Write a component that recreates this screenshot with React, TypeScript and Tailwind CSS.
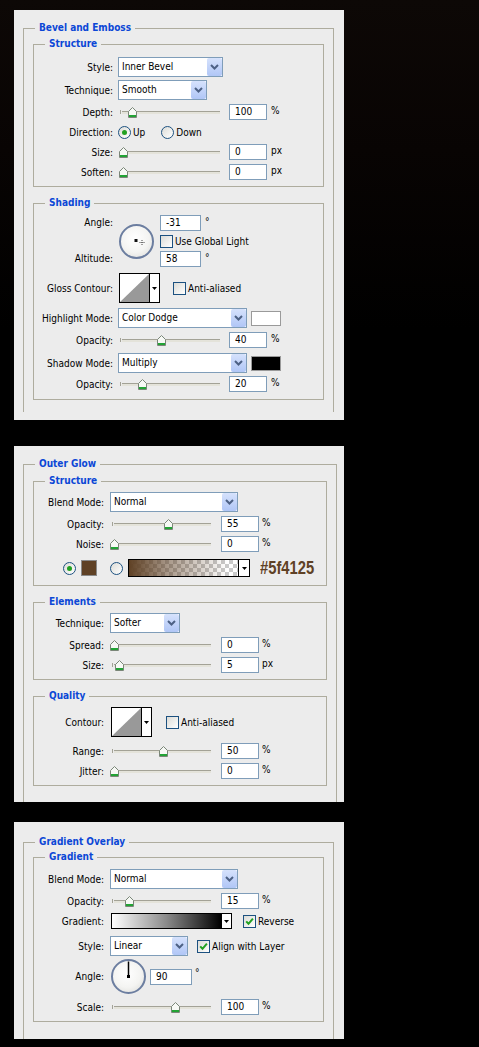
import React from "react";

const LINE = "border-[#aeac9e]";

function Legend({ children }: { children: React.ReactNode }) {
  return (
    <legend className="ml-[11px] px-[4px] text-[10px] font-bold leading-[12px] text-[#0b47d6]">
      {children}
    </legend>
  );
}

function Field({ value, className = "", w = "w-[38px]" }: { value: string; className?: string; w?: string }) {
  return (
    <div className={`${w} ${className} flex h-[16px] shrink-0 items-center border border-[#7f9db9] bg-white pl-[5px] leading-none`}>
      {value}
    </div>
  );
}

function Select({ w, value, className = "" }: { w: string; value: string; className?: string }) {
  return (
    <div className={`${w} ${className} flex h-[20px] shrink-0 items-center border border-[#7f9db9] bg-white`}>
      <span className="flex-1 pl-[3px] leading-none">{value}</span>
      <span className="flex h-full w-[15px] items-center justify-center rounded-[2px] bg-linear-to-b from-[#d6e2fc] to-[#b0c6f6]">
        <svg width="9" height="6" viewBox="0 0 9 6">
          <path d="M1 1l3.5 3.5L8 1" fill="none" stroke="#4d6185" strokeWidth="2" />
        </svg>
      </span>
    </div>
  );
}

function Thumb({ left }: { left: number }) {
  return (
    <svg
      width="9"
      height="11"
      viewBox="0 0 9 11"
      className="absolute top-[2px]"
      style={{ left }}
    >
      <path d="M0.5 10.5V4.5L4.5 0.5L8.5 4.5V10.5Z" fill="#f7f9f5" stroke="#7a8678" />
      <rect x="1" y="8" width="7" height="2" fill="#22a335" />
    </svg>
  );
}

function Slider({ w, pos }: { w: string; pos: number }) {
  return (
    <div className={`${w} relative h-[14px] shrink-0`}>
      <div className="absolute left-[4px] right-[2px] top-[6px] h-[3px] border-t border-[#a3a296] bg-[#e4e3da]" />
      <div className="absolute left-[2px] top-[5px] h-[4px] w-[1px] bg-[#a3a296]" />
      <Thumb left={4 + pos - 4.5} />
    </div>
  );
}

function SliderRow({
  label,
  value,
  unit,
  pos,
  wide,
  className = "",
}: {
  label: string;
  value: string;
  unit: string;
  pos: number;
  wide?: boolean;
  className?: string;
}) {
  return (
    <div className={`flex h-[16px] items-center ${className}`}>
      <div className={`${wide ? "w-[79px]" : "w-[70px]"} shrink-0 text-right`}>{label}</div>
      <Slider w={wide ? "ml-[5px] w-[104px]" : "ml-[6px] w-[103px]"} pos={pos} />
      <Field className={wide ? "ml-[7px]" : "ml-[8px]"} value={value} />
      <span className={`${wide ? "ml-[4px]" : "ml-[3px]"} -mt-[3px]`}>{unit}</span>
    </div>
  );
}

function Radio({ checked, className = "" }: { checked?: boolean; className?: string }) {
  return (
    <span
      className={`${className} flex h-[13px] w-[13px] shrink-0 items-center justify-center rounded-full border border-[#1c5180] bg-linear-to-br from-[#dcdcd7] to-white`}
    >
      {checked && <span className="h-[5px] w-[5px] rounded-full bg-[#21a121]" />}
    </span>
  );
}

function Check({ checked, className = "" }: { checked?: boolean; className?: string }) {
  return (
    <span
      className={`${className} flex h-[13px] w-[13px] shrink-0 items-center justify-center border border-[#1c5180] bg-linear-to-br from-[#dcdcd7] to-white`}
    >
      {checked && (
        <svg width="9" height="9" viewBox="0 0 9 9">
          <path d="M1.2 4.4l2.3 2.4L7.9 1.6" fill="none" stroke="#21a121" strokeWidth="2" />
        </svg>
      )}
    </span>
  );
}

function Arrow() {
  return (
    <svg width="5" height="3" viewBox="0 0 5 3">
      <path d="M0 0h5L2.5 3z" fill="#000" />
    </svg>
  );
}

function ContourBox({ className = "" }: { className?: string }) {
  return (
    <div className={`${className} flex h-[30px] w-[41px] shrink-0 border border-black bg-white`}>
      <svg width="29" height="28" viewBox="0 0 29 28" className="block">
        <path d="M0 28L29 0V28Z" fill="#999999" />
      </svg>
      <div className="flex w-[10px] items-center justify-center border-l border-black">
        <Arrow />
      </div>
    </div>
  );
}

function Panel({ className, children }: { className: string; children: React.ReactNode }) {
  return <div className={`${className} w-[330px] bg-[#ececec] pl-[9px] pr-[10px]`}>{children}</div>;
}

export default function App() {
  return (
    <div className="min-h-[1047px] w-full bg-[linear-gradient(to_bottom,#0d0806_0px,#080403_150px,#000000_330px)] pl-[14px] pt-[10px] font-[family-name:'DejaVu_Sans_Condensed','Liberation_Sans',sans-serif] text-[10px] text-black">
      {/* Bevel and Emboss */}
      <Panel className="pt-[12px] pb-[8px]">
        <fieldset className={`border-x border-t ${LINE}`}>
          <Legend>Bevel and Emboss</Legend>
          <div className="px-[9px] pb-[12px]">
            <fieldset className={`mt-[4px] border ${LINE}`}>
              <Legend>Structure</Legend>
              <div className="pt-[7px] pb-[6px]">
                <div className="flex h-[20px] items-center">
                  <div className="w-[79px] shrink-0 text-right">Style:</div>
                  <Select className="ml-[5px]" w="w-[105px]" value="Inner Bevel" />
                </div>
                <div className="mt-[3px] flex h-[20px] items-center">
                  <div className="w-[79px] shrink-0 text-right">Technique:</div>
                  <Select className="ml-[5px]" w="w-[89px]" value="Smooth" />
                </div>
                <SliderRow wide className="mt-[4px]" label="Depth:" value="100" unit="%" pos={10} />
                <div className="mt-[4px] flex h-[16px] items-center">
                  <div className="w-[79px] shrink-0 text-right">Direction:</div>
                  <Radio checked className="ml-[5px]" />
                  <span className="ml-[2px]">Up</span>
                  <Radio className="ml-[16px]" />
                  <span className="ml-[2px]">Down</span>
                </div>
                <SliderRow wide className="mt-[4px]" label="Size:" value="0" unit="px" pos={1} />
                <SliderRow wide className="mt-[4px]" label="Soften:" value="0" unit="px" pos={1} />
              </div>
            </fieldset>

            <fieldset className={`mt-[10px] border ${LINE}`}>
              <Legend>Shading</Legend>
              <div className="pt-[6px] pb-[7px]">
                <div className="flex h-[52px] items-stretch">
                  <div className="flex w-[79px] shrink-0 flex-col justify-between text-right">
                    <div className="h-[16px] leading-[16px]">Angle:</div>
                    <div className="h-[16px] leading-[16px]">Altitude:</div>
                  </div>
                  <div className="ml-[6px] h-[35px] w-[35px] shrink-0 self-center rounded-full border-2 border-[#6c7ea0] bg-[radial-gradient(circle_at_45%_40%,#ffffff_0%,#f4f4f2_55%,#d9d9d5_100%)]">
                    <svg className="block" width="31" height="31" viewBox="0 0 31 31">
                      <rect x="13.5" y="13" width="3" height="3" fill="#111" />
                      <path d="M18.5 16.5h5M21 14v5" stroke="#444" strokeWidth="1" strokeDasharray="1 1" />
                    </svg>
                  </div>
                  <div className="ml-[6px] flex flex-col">
                    <div className="flex items-start">
                      <Field w="w-[41px]" value="-31" />
                      <span className="ml-[4px] -mt-[1px]">°</span>
                    </div>
                    <div className="mt-[4px] flex h-[13px] items-center">
                      <Check />
                      <span className="ml-[2px]">Use Global Light</span>
                    </div>
                    <div className="mt-[3px] flex items-start">
                      <Field w="w-[41px]" value="58" />
                      <span className="ml-[4px] -mt-[1px]">°</span>
                    </div>
                  </div>
                </div>
                <div className="mt-[6px] flex h-[30px] items-center">
                  <div className="w-[79px] shrink-0 text-right">Gloss Contour:</div>
                  <ContourBox className="ml-[6px]" />
                  <Check className="ml-[13px]" />
                  <span className="ml-[2px]">Anti-aliased</span>
                </div>
                <div className="mt-[5px] flex h-[20px] items-center">
                  <div className="w-[79px] shrink-0 text-right">Highlight Mode:</div>
                  <Select className="ml-[5px]" w="w-[129px]" value="Color Dodge" />
                  <div className="ml-[4px] h-[15px] w-[30px] border border-[#9a9a9a] bg-white" />
                </div>
                <SliderRow wide className="mt-[4px]" label="Opacity:" value="40" unit="%" pos={39} />
                <div className="mt-[5px] flex h-[20px] items-center">
                  <div className="w-[79px] shrink-0 text-right">Shadow Mode:</div>
                  <Select className="ml-[5px]" w="w-[129px]" value="Multiply" />
                  <div className="ml-[4px] h-[15px] w-[30px] border border-[#9a9a9a] bg-black" />
                </div>
                <SliderRow wide className="mt-[3px]" label="Opacity:" value="20" unit="%" pos={20} />
              </div>
            </fieldset>
          </div>
        </fieldset>
      </Panel>

      {/* Outer Glow */}
      <Panel className="mt-[26px] pt-[12px]">
        <fieldset className={`border-x border-t ${LINE}`}>
          <Legend>Outer Glow</Legend>
          <div className="px-[9px] pb-[16px]">
            <fieldset className={`mt-[5px] border ${LINE}`}>
              <Legend>Structure</Legend>
              <div className="pt-[5px] pb-[8px]">
                <div className="flex h-[20px] items-center">
                  <div className="w-[70px] shrink-0 text-right">Blend Mode:</div>
                  <Select className="ml-[6px]" w="w-[128px]" value="Normal" />
                </div>
                <SliderRow className="mt-[4px]" label="Opacity:" value="55" unit="%" pos={54} />
                <SliderRow className="mt-[4px]" label="Noise:" value="0" unit="%" pos={0.5} />
                <div className="mt-[7px] flex h-[18px] items-center">
                  <Radio checked className="ml-[29px]" />
                  <div className="ml-[5px] h-[16px] w-[16px] border border-[#8a8a8a] bg-[#5f4125]" />
                  <Radio className="ml-[13px]" />
                  <div className="ml-[5px] flex h-[18px] w-[122px] shrink-0 border border-black shadow-[inset_1px_1px_0_#000]">
                    <div className="h-full flex-1 bg-[conic-gradient(#c9c9c9_25%,#ffffff_0_50%,#c9c9c9_0_75%,#ffffff_0)] bg-[length:8px_8px]">
                      <div className="h-full w-full bg-[linear-gradient(to_right,#5f4125,rgba(95,65,37,0.55)_35%,rgba(95,65,37,0)_90%)]" />
                    </div>
                    <div className="flex w-[11px] items-center justify-center border-l border-black bg-white">
                      <Arrow />
                    </div>
                  </div>
                  <span className="ml-[10px] origin-left scale-x-[0.82] font-[family-name:'Liberation_Sans',sans-serif] text-[18px] font-bold leading-none text-[#5f4125]">
                    #5f4125
                  </span>
                </div>
              </div>
            </fieldset>

            <fieldset className={`mt-[10px] border ${LINE}`}>
              <Legend>Elements</Legend>
              <div className="pt-[5px] pb-[6px]">
                <div className="flex h-[20px] items-center">
                  <div className="w-[70px] shrink-0 text-right">Technique:</div>
                  <Select className="ml-[6px]" w="w-[70px]" value="Softer" />
                </div>
                <SliderRow className="mt-[4px]" label="Spread:" value="0" unit="%" pos={0.5} />
                <SliderRow className="mt-[4px]" label="Size:" value="5" unit="px" pos={5} />
              </div>
            </fieldset>

            <fieldset className={`mt-[10px] border ${LINE}`}>
              <Legend>Quality</Legend>
              <div className="pt-[5px] pb-[6px]">
                <div className="flex h-[30px] items-center">
                  <div className="w-[70px] shrink-0 text-right">Contour:</div>
                  <ContourBox className="ml-[7px]" />
                  <Check className="ml-[14px]" />
                  <span className="ml-[2px]">Anti-aliased</span>
                </div>
                <SliderRow className="mt-[6px]" label="Range:" value="50" unit="%" pos={49} />
                <SliderRow className="mt-[4px]" label="Jitter:" value="0" unit="%" pos={0.5} />
              </div>
            </fieldset>
          </div>
        </fieldset>
      </Panel>

      {/* Gradient Overlay */}
      <Panel className="mt-[20px] pt-[14px]">
        <fieldset className={`border-x border-t ${LINE}`}>
          <Legend>Gradient Overlay</Legend>
          <div className="px-[9px] pb-[17px]">
            <fieldset className={`mt-[3px] border ${LINE}`}>
              <Legend>Gradient</Legend>
              <div className="pt-[6px] pb-[6px]">
                <div className="flex h-[20px] items-center">
                  <div className="w-[70px] shrink-0 text-right">Blend Mode:</div>
                  <Select className="ml-[6px]" w="w-[128px]" value="Normal" />
                </div>
                <SliderRow className="mt-[4px]" label="Opacity:" value="15" unit="%" pos={15} />
                <div className="mt-[4px] flex h-[16px] items-center">
                  <div className="w-[70px] shrink-0 text-right">Gradient:</div>
                  <div className="ml-[7px] flex h-[16px] w-[121px] shrink-0 border border-black shadow-[inset_1px_1px_0_#000]">
                    <div className="h-full flex-1 bg-[linear-gradient(to_right,#ffffff,#8a8a8a_50%,#000000_100%)]" />
                    <div className="flex w-[10px] items-center justify-center border-l border-black bg-white">
                      <Arrow />
                    </div>
                  </div>
                  <Check checked className="ml-[11px]" />
                  <span className="ml-[2px]">Reverse</span>
                </div>
                <div className="mt-[7px] flex h-[20px] items-center">
                  <div className="w-[70px] shrink-0 text-right">Style:</div>
                  <Select className="ml-[6px]" w="w-[78px]" value="Linear" />
                  <Check checked className="ml-[9px]" />
                  <span className="ml-[2px]">Align with Layer</span>
                </div>
                <div className="mt-[3px] flex h-[35px] items-center">
                  <div className="w-[70px] shrink-0 text-right">Angle:</div>
                  <div className="ml-[7px] h-[35px] w-[35px] shrink-0 rounded-full border-2 border-[#6c7ea0] bg-[radial-gradient(circle_at_45%_40%,#ffffff_0%,#f4f4f2_55%,#d9d9d5_100%)]">
                    <svg className="block" width="31" height="31" viewBox="0 0 31 31">
                      <path d="M15.5 0.5V15.5" stroke="#000" strokeWidth="1.5" />
                      <rect x="14" y="14" width="3" height="3" fill="#000" />
                    </svg>
                  </div>
                  <Field className="ml-[4px]" w="w-[42px]" value="90" />
                  <span className="ml-[3px] -mt-[8px]">°</span>
                </div>
                <SliderRow className="mt-[5px]" label="Scale:" value="100" unit="%" pos={61} />
              </div>
            </fieldset>
          </div>
        </fieldset>
      </Panel>
    </div>
  );
}
